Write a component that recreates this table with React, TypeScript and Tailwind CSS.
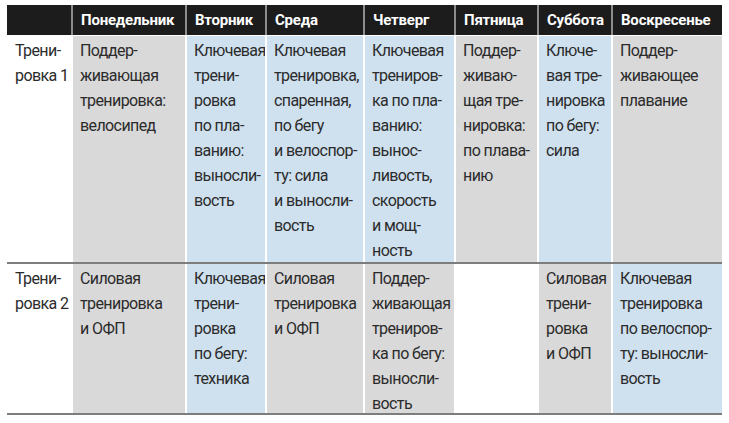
type Tone = 'gray' | 'blue' | 'white'

interface Cell {
  tone: Tone
  lines: string[]
}

const days = ['Понедельник', 'Вторник', 'Среда', 'Четверг', 'Пятница', 'Суббота', 'Воскресенье']

const rows: { label: string[]; rowH: string; cells: Cell[] }[] = [
  {
    label: ['Трени-', 'ровка 1'],
    rowH: 'grid-rows-[226px]',
    cells: [
      { tone: 'gray', lines: ['Поддер-', 'живающая', 'тренировка:', 'велосипед'] },
      { tone: 'blue', lines: ['Ключевая', 'трени-', 'ровка', 'по пла-', 'ванию:', 'выносли-', 'вость'] },
      { tone: 'blue', lines: ['Ключевая', 'тренировка,', 'спаренная,', 'по бегу', 'и велоспор-', 'ту: сила', 'и выносли-', 'вость'] },
      { tone: 'blue', lines: ['Ключевая', 'трениров-', 'ка по пла-', 'ванию:', 'вынос-', 'ливость,', 'скорость', 'и мощ-', 'ность'] },
      { tone: 'gray', lines: ['Поддер-', 'живаю-', 'щая тре-', 'нировка:', 'по плава-', 'нию'] },
      { tone: 'blue', lines: ['Ключе-', 'вая тре-', 'нировка', 'по бегу:', 'сила'] },
      { tone: 'gray', lines: ['Поддер-', 'живающее', 'плавание'] },
    ],
  },
  {
    label: ['Трени-', 'ровка 2'],
    rowH: 'grid-rows-[149px]',
    cells: [
      { tone: 'gray', lines: ['Силовая', 'тренировка', 'и ОФП'] },
      { tone: 'blue', lines: ['Ключевая', 'трени-', 'ровка', 'по бегу:', 'техника'] },
      { tone: 'gray', lines: ['Силовая', 'тренировка', 'и ОФП'] },
      { tone: 'gray', lines: ['Поддер-', 'живающая', 'трениров-', 'ка по бегу:', 'выносли-', 'вость'] },
      { tone: 'white', lines: [] },
      { tone: 'gray', lines: ['Силовая', 'трени-', 'ровка', 'и ОФП'] },
      { tone: 'blue', lines: ['Ключевая', 'тренировка', 'по велоспор-', 'ту: выносли-', 'вость'] },
    ],
  },
]

const toneClass: Record<Tone, string> = {
  gray: 'bg-[#d9d9d9]',
  blue: 'bg-[#cfe1ef]',
  white: 'bg-white',
}

const cols = 'grid grid-cols-[64px_112px_78px_96px_89px_81px_72px_109px] gap-x-[2px]'

function Lines({ lines }: { lines: string[] }) {
  return (
    <>
      {lines.map((l, i) => (
        <div key={i} className="whitespace-nowrap">{l}</div>
      ))}
    </>
  )
}

export default function App() {
  return (
    <div
      className="w-[729px] h-[423px] bg-white pt-[5px] pl-[7px] overflow-hidden"
      style={{ fontFamily: 'Roboto, "Open Sans", sans-serif' }}
    >
      <div className="w-[715px]">
        {/* Header */}
        <div className={`${cols} h-[30px] bg-[#8c8c8c] mb-[1px]`}>
          <div className="bg-[#1c1c1c]" />
          {days.map(d => (
            <div key={d} className="bg-[#1c1c1c] text-white font-bold text-[15px] tracking-[-0.2px] pl-2 flex items-center">
              {d}
            </div>
          ))}
        </div>

        {rows.map((r, ri) => (
          <div key={ri} className="border-b-2 border-[#7d7d7d]">
            <div className={`${cols} ${r.rowH} text-[16px] leading-[25px] text-[#2b2b2b] tracking-[-0.6px]`}>
              <div className="pl-2 pt-[2px] bg-white overflow-hidden">
                <Lines lines={r.label} />
              </div>
              {r.cells.map((c, ci) => (
                <div key={ci} className={`${toneClass[c.tone]} pl-[7px] pt-[2px] overflow-hidden`}>
                  <Lines lines={c.lines} />
                </div>
              ))}
            </div>
          </div>
        ))}
      </div>
    </div>
  )
}
